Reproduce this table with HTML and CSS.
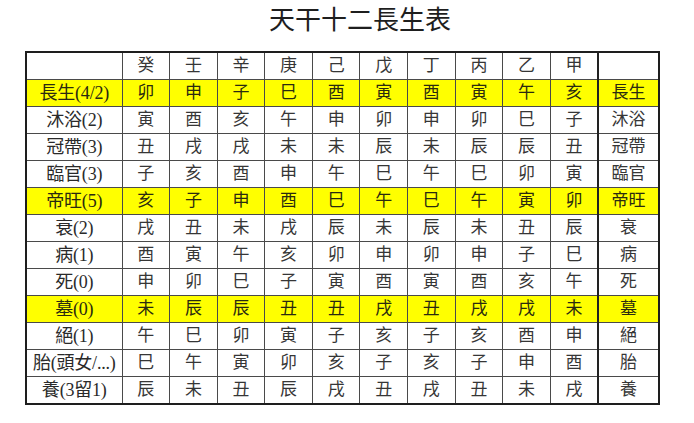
FILE: index.html
```html
<!DOCTYPE html>
<html lang="zh-Hant">
<head>
<meta charset="utf-8">
<title>天干十二長生表</title>
<link rel="stylesheet" href="styles.css">
</head>
<body>
<div class="page">
  <h1 class="title">天干十二長生表</h1>
  <table class="grid">
    <colgroup>
      <col class="c-label">
      <col class="c-stem"><col class="c-stem"><col class="c-stem"><col class="c-stem"><col class="c-stem">
      <col class="c-stem"><col class="c-stem"><col class="c-stem"><col class="c-stem"><col class="c-stem">
      <col class="c-end">
    </colgroup>
    <tbody>
      <tr><td class="lab"></td><td>癸</td><td>壬</td><td>辛</td><td>庚</td><td>己</td><td>戊</td><td>丁</td><td>丙</td><td>乙</td><td>甲</td><td class="end"></td></tr>
      <tr class="hl"><td class="lab">長生(4/2)</td><td>卯</td><td>申</td><td>子</td><td>巳</td><td>酉</td><td>寅</td><td>酉</td><td>寅</td><td>午</td><td>亥</td><td class="end">長生</td></tr>
      <tr><td class="lab">沐浴(2)</td><td>寅</td><td>酉</td><td>亥</td><td>午</td><td>申</td><td>卯</td><td>申</td><td>卯</td><td>巳</td><td>子</td><td class="end">沐浴</td></tr>
      <tr><td class="lab">冠帶(3)</td><td>丑</td><td>戌</td><td>戌</td><td>未</td><td>未</td><td>辰</td><td>未</td><td>辰</td><td>辰</td><td>丑</td><td class="end">冠帶</td></tr>
      <tr><td class="lab">臨官(3)</td><td>子</td><td>亥</td><td>酉</td><td>申</td><td>午</td><td>巳</td><td>午</td><td>巳</td><td>卯</td><td>寅</td><td class="end">臨官</td></tr>
      <tr class="hl"><td class="lab">帝旺(5)</td><td>亥</td><td>子</td><td>申</td><td>酉</td><td>巳</td><td>午</td><td>巳</td><td>午</td><td>寅</td><td>卯</td><td class="end">帝旺</td></tr>
      <tr><td class="lab">衰(2)</td><td>戌</td><td>丑</td><td>未</td><td>戌</td><td>辰</td><td>未</td><td>辰</td><td>未</td><td>丑</td><td>辰</td><td class="end">衰</td></tr>
      <tr><td class="lab">病(1)</td><td>酉</td><td>寅</td><td>午</td><td>亥</td><td>卯</td><td>申</td><td>卯</td><td>申</td><td>子</td><td>巳</td><td class="end">病</td></tr>
      <tr><td class="lab">死(0)</td><td>申</td><td>卯</td><td>巳</td><td>子</td><td>寅</td><td>酉</td><td>寅</td><td>酉</td><td>亥</td><td>午</td><td class="end">死</td></tr>
      <tr class="hl"><td class="lab">墓(0)</td><td>未</td><td>辰</td><td>辰</td><td>丑</td><td>丑</td><td>戌</td><td>丑</td><td>戌</td><td>戌</td><td>未</td><td class="end">墓</td></tr>
      <tr><td class="lab">絕(1)</td><td>午</td><td>巳</td><td>卯</td><td>寅</td><td>子</td><td>亥</td><td>子</td><td>亥</td><td>酉</td><td>申</td><td class="end">絕</td></tr>
      <tr><td class="lab">胎(頭女/...)</td><td>巳</td><td>午</td><td>寅</td><td>卯</td><td>亥</td><td>子</td><td>亥</td><td>子</td><td>申</td><td>酉</td><td class="end">胎</td></tr>
      <tr><td class="lab">養(3留1)</td><td>辰</td><td>未</td><td>丑</td><td>辰</td><td>戌</td><td>丑</td><td>戌</td><td>丑</td><td>未</td><td>戌</td><td class="end">養</td></tr>
    </tbody>
  </table>
</div>
</body>
</html>
```

FILE: styles.css
```css
html, body {
  margin: 0;
  padding: 0;
  background: #ffffff;
}

.page {
  width: 694px;
  height: 423px;
}

.title {
  margin: 0;
  padding-left: 26px;
  height: 51px;
  line-height: 38px;
  margin-top: -1px;
  margin-bottom: 1px;
  text-align: center;
  font-family: "Noto Sans CJK TC", "Noto Sans CJK SC", sans-serif;
  font-weight: 400;
  font-size: 26px;
  color: #1e1e1e;
}

.grid {
  margin-left: 25px;
  border-collapse: collapse;
  table-layout: fixed;
  width: 633px;
  border: 2px solid #1e1e1e;
  font-family: "Liberation Serif", "Noto Sans CJK TC", serif;
  font-size: 17px;
  color: #363636;
}

.c-label { width: 96px; }
.c-stem { width: 47.6px; }
.c-end { width: 61px; }

.grid td {
  height: 26px;
  padding: 0;
  border: 1px solid #4a4a4a;
  text-align: center;
  vertical-align: middle;
  line-height: 26px;
  white-space: nowrap;
  overflow: hidden;
}

.grid td.lab {
  font-size: 18px;
  color: #2a2a2a;
  letter-spacing: -0.2px;
}

.grid td.end {
  border-left: 2px solid #222;
}

.grid tr.hl td {
  background: #ffff00;
  color: #2a2a10;
}
```
